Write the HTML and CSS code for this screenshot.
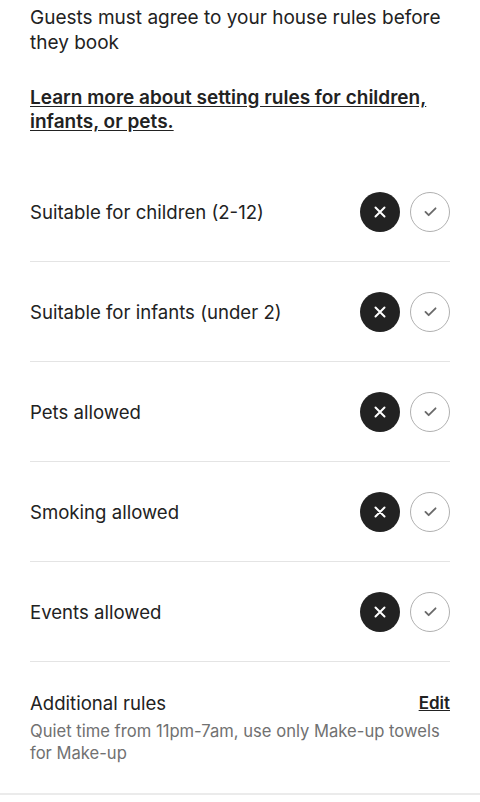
FILE: index.html
```html
<!DOCTYPE html>
<html lang="en">
<head>
    <meta charset="UTF-8">
    <meta name="viewport" content="width=device-width, initial-scale=1.0">
    <title>House rules</title>
    <link rel="stylesheet" href="styles.css">
</head>
<body>
    <div class="page">
        <p class="intro">Guests must agree to your house rules before they book</p>
        <a class="learn" href="#">Learn more about setting rules for children, infants, or pets.</a>

        <div class="rules">
            <div class="rule">
                <span class="rule-name">Suitable for children (2-12)</span>
                <div class="choices">
                    <button class="choice no"><svg viewBox="0 0 12 12"><path d="M1.5 1.5l9 9M10.5 1.5l-9 9"/></svg></button>
                    <button class="choice yes"><svg viewBox="0 0 14 12"><path d="M1.5 6.5l3.5 3.5 7.5-7.5"/></svg></button>
                </div>
            </div>
            <div class="rule">
                <span class="rule-name">Suitable for infants (under 2)</span>
                <div class="choices">
                    <button class="choice no"><svg viewBox="0 0 12 12"><path d="M1.5 1.5l9 9M10.5 1.5l-9 9"/></svg></button>
                    <button class="choice yes"><svg viewBox="0 0 14 12"><path d="M1.5 6.5l3.5 3.5 7.5-7.5"/></svg></button>
                </div>
            </div>
            <div class="rule">
                <span class="rule-name">Pets allowed</span>
                <div class="choices">
                    <button class="choice no"><svg viewBox="0 0 12 12"><path d="M1.5 1.5l9 9M10.5 1.5l-9 9"/></svg></button>
                    <button class="choice yes"><svg viewBox="0 0 14 12"><path d="M1.5 6.5l3.5 3.5 7.5-7.5"/></svg></button>
                </div>
            </div>
            <div class="rule">
                <span class="rule-name">Smoking allowed</span>
                <div class="choices">
                    <button class="choice no"><svg viewBox="0 0 12 12"><path d="M1.5 1.5l9 9M10.5 1.5l-9 9"/></svg></button>
                    <button class="choice yes"><svg viewBox="0 0 14 12"><path d="M1.5 6.5l3.5 3.5 7.5-7.5"/></svg></button>
                </div>
            </div>
            <div class="rule">
                <span class="rule-name">Events allowed</span>
                <div class="choices">
                    <button class="choice no"><svg viewBox="0 0 12 12"><path d="M1.5 1.5l9 9M10.5 1.5l-9 9"/></svg></button>
                    <button class="choice yes"><svg viewBox="0 0 14 12"><path d="M1.5 6.5l3.5 3.5 7.5-7.5"/></svg></button>
                </div>
            </div>
        </div>

        <div class="additional">
            <div class="additional-head">
                <span class="additional-title">Additional rules</span>
                <a class="edit" href="#">Edit</a>
            </div>
            <p class="additional-text">Quiet time from 11pm-7am, use only Make-up towels for Make-up</p>
        </div>
    </div>
</body>
</html>
```

FILE: styles.css
```css
body {
    margin: 0;
    background: #fff;
    color: #222;
    font-family: Inter, "Noto Sans", sans-serif;
}
.page {
    padding: 5px 30px 0;
}
.intro {
    margin: 0;
    font-size: 19px;
    line-height: 25px;
}
.learn {
    display: block;
    margin-top: 31px;
    color: #222;
    font-size: 19px;
    font-weight: 600;
    line-height: 24px;
    text-decoration: underline;
    text-underline-offset: 2px;
}
.rules {
    margin-top: 28px;
}
.rule {
    display: flex;
    align-items: center;
    justify-content: space-between;
    height: 99px;
    border-bottom: 1px solid #e4e4e4;
}
.rule-name {
    font-size: 18.6px;
}
.choices {
    display: flex;
    gap: 10px;
}
.choice {
    width: 40px;
    height: 40px;
    padding: 0;
    border-radius: 50%;
    display: flex;
    align-items: center;
    justify-content: center;
    cursor: pointer;
}
.choice svg {
    fill: none;
    stroke-linecap: round;
    stroke-linejoin: round;
}
.choice.no {
    background: #222;
    border: none;
}
.choice.no svg {
    width: 12px;
    height: 12px;
    stroke: #fff;
    stroke-width: 2;
}
.choice.yes {
    background: #fff;
    border: 1px solid #b0b0b0;
}
.choice.yes svg {
    width: 13px;
    height: 11px;
    stroke: #6a6a6a;
    stroke-width: 2;
}
.additional {
    margin: 0 -30px;
    padding: 29px 30px 29px;
    border-bottom: 2px solid #ebebeb;
}
.additional-head {
    display: flex;
    justify-content: space-between;
    align-items: center;
    line-height: 24px;
}
.additional-title {
    font-size: 18.6px;
}
.edit {
    color: #222;
    font-size: 17px;
    font-weight: 600;
    text-decoration: underline;
}
.additional-text {
    margin: 5px 0 0;
    color: #717171;
    font-size: 16.6px;
    line-height: 22px;
}
```
